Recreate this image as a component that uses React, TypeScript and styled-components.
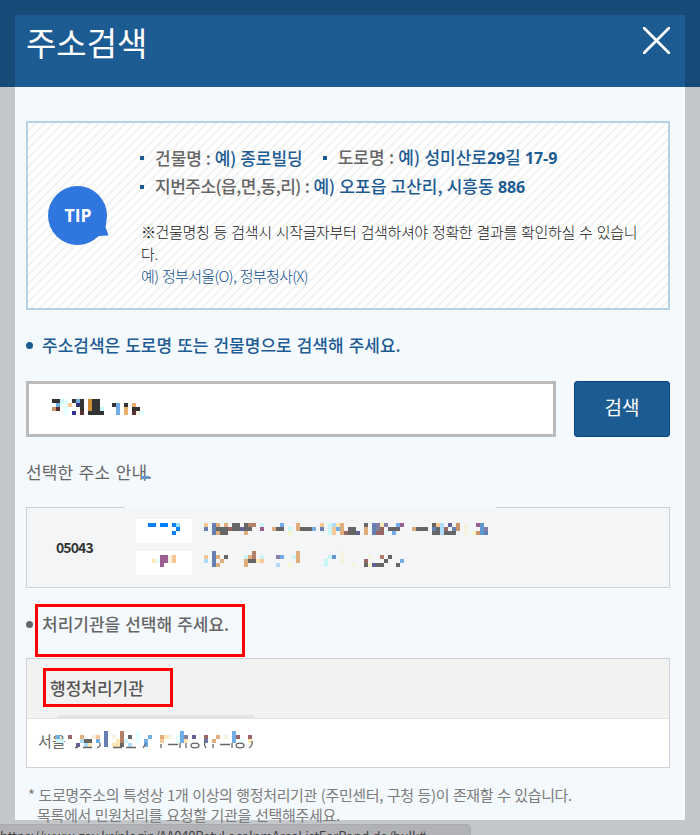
import React from "react";
import styled, { createGlobalStyle } from "styled-components";

const GlobalStyle = createGlobalStyle`
  * { box-sizing: border-box; }
  body {
    margin: 0;
    font-family: "Noto Sans CJK KR", "Noto Sans", sans-serif;
    background: #c3c7ca;
  }
  p, h1, h2, ul { margin: 0; padding: 0; font-weight: inherit; }
  ul { list-style: none; }
`;

type TextProps = {
  $size?: number;
  $line?: number;
  $weight?: number;
  $color?: string;
  $spacing?: number;
  $word?: number;
};

const Text = styled.p<TextProps>`
  font-size: ${(p) => p.$size ?? 17}px;
  line-height: ${(p) => p.$line ?? 24}px;
  font-weight: ${(p) => p.$weight ?? 500};
  color: ${(p) => p.$color ?? "#666"};
  letter-spacing: ${(p) => p.$spacing ?? 0}px;
  word-spacing: ${(p) => p.$word ?? 0}px;
  white-space: nowrap;
`;

const Blue = styled.span`
  color: #1d5b93;
`;

const Tight = styled.span`
  letter-spacing: -0.5px;
`;

const Digits = styled.span`
  font-family: "Noto Sans", sans-serif;
  font-size: 16px;
  font-weight: 700;
  letter-spacing: -0.1px;
`;

const Screen = styled.div`
  position: relative;
  width: 700px;
  height: 835px;
  padding: 15px 15px 0;
  overflow: hidden;
  background: linear-gradient(#164a77 87px, #c3c7ca 87px);
`;

const Dialog = styled.section`
  height: 805px;
  background: #f4f9fd;
`;

const Header = styled.header`
  display: flex;
  justify-content: space-between;
  height: 72px;
  padding: 5px 15px 0 11px;
  background: #1d5b93;
`;

const CloseButton = styled.button`
  width: 27px;
  height: 27px;
  margin-top: 7px;
  padding: 0;
  border: 0;
  background: none;
  svg { display: block; }
`;

const Body = styled.main`
  display: flex;
  flex-direction: column;
  padding: 34px 15px 0 11px;
`;

const TipBox = styled.div`
  display: flex;
  height: 189px;
  padding: 0 20px;
  border: 2px solid #b7d0e6;
  background: repeating-linear-gradient(135deg, #fff 0 4.9px, #f3f3f3 4.9px 6.364px);
`;

const TipBadge = styled.svg`
  flex: none;
  width: 62px;
  height: 62px;
  margin-top: 62px;
`;

const TipContent = styled.div`
  margin-left: 30px;
  padding-top: 20px;
`;

const TipItems = styled.ul`
  display: flex;
  flex-wrap: wrap;
  column-gap: 20px;
  width: 500px;
  margin-bottom: 20px;
`;

const TipNotes = styled.div`
  padding-left: 1px;
`;

const TipItem = styled.li`
  display: flex;
  align-items: center;
  gap: 11px;
  height: 29px;
  &::before {
    content: "";
    width: 4px;
    height: 4px;
    background: #1d5b93;
  }
`;

const Guide = styled.div<{ $color: string; $top: number }>`
  display: flex;
  align-items: center;
  gap: 9px;
  height: 24px;
  margin-top: ${(p) => p.$top}px;
  &::before {
    content: "";
    width: 7px;
    height: 7px;
    border-radius: 50%;
    background: ${(p) => p.$color};
  }
`;

const SearchRow = styled.div`
  display: flex;
  gap: 18px;
  height: 56px;
  margin-top: 24px;
`;

const SearchField = styled.div`
  width: 530px;
  padding: 15px 23px;
  border: 3px solid #bbb;
  background: #fff;
`;

const SearchButton = styled.button`
  width: 96px;
  padding: 0 0 5px;
  border: 1px solid #064586;
  border-radius: 3px;
  background: #1d5b93;
  color: #fff;
  font: 400 19px "Noto Sans CJK KR", sans-serif;
`;

const SelectedLabel = styled.div`
  display: flex;
  align-items: flex-end;
  height: 24px;
  margin-top: 23px;
`;

const LabelMark = styled.i`
  width: 8px;
  height: 3px;
  margin: 0 0 5px -11px;
  background: #6296cf;
`;

const AddressCard = styled.div`
  position: relative;
  display: flex;
  height: 81px;
  margin-top: 23px;
  border: 1px solid #d0d1d6;
  background: #f4f5f7;
  &::before {
    content: "";
    position: absolute;
    top: -1px;
    left: 98px;
    width: 371px;
    height: 1px;
    background: #f4f5f7;
  }
`;

const ZipCell = styled.div`
  display: flex;
  align-items: center;
  width: 109px;
  padding: 0 0 2px 29px;
`;

const AddressLines = styled.div`
  display: flex;
  flex-direction: column;
  gap: 8px;
  padding-top: 11px;
`;

const AddressLine = styled.div`
  display: flex;
  gap: 12px;
  height: 24px;
`;

const AddressKind = styled.div<{ $indent: number }>`
  width: 56px;
  padding: 4px 0 0 ${(p) => p.$indent}px;
  background: #fff;
`;

const AddressValue = styled.div<{ $top: number }>`
  padding-top: ${(p) => p.$top}px;
`;

const AgencyTable = styled.div`
  height: 110px;
  margin-top: 22px;
  border: 1px solid #cfd1d5;
  background: #fff;
`;

const AgencyHead = styled.div`
  position: relative;
  height: 60px;
  padding: 17px 0 0 23px;
  border-bottom: 1px solid #e4e4e4;
  background: #f2f2f2;
  &::after {
    content: "";
    position: absolute;
    left: 30px;
    bottom: 0;
    width: 197px;
    height: 3px;
    background: #e4e4e4;
  }
`;

const AgencyRow = styled.div`
  position: relative;
  padding: 10px 0 0 11px;
`;

const MaskLayer = styled.div`
  position: absolute;
  top: 12px;
  left: 29px;
  svg { display: block; }
`;

const Notes = styled.div`
  margin-top: 17px;
  padding-left: 2px;
`;

const Indent = styled.div`
  padding-left: 9px;
`;

const Highlight = styled.div<{ $x: number; $y: number; $w: number; $h: number }>`
  position: absolute;
  left: ${(p) => p.$x}px;
  top: ${(p) => p.$y}px;
  width: ${(p) => p.$w}px;
  height: ${(p) => p.$h}px;
  border: 3px solid #ff0000;
`;

const StatusBar = styled.div`
  position: absolute;
  left: 0;
  bottom: 0;
  width: 471px;
  height: 11px;
  padding: 4px 0 0;
  overflow: hidden;
  border-top: 1px solid #a9abae;
  border-right: 1px solid #a9abae;
  border-radius: 0 5px 0 0;
  background: #b1b2b6;
`;

const MosaicSvg = styled.svg`
  display: block;
  shape-rendering: crispEdges;
`;

const palette: Record<string, string> = {
  K: "#333333",
  G: "#666666",
  g: "#80809a",
  c: "#ccf5f8",
  v: "#e6ffff",
  B: "#72aee6",
  b: "#6296cf",
  L: "#aedcf8",
  O: "#cf9033",
  o: "#ebae6b",
  P: "#f7c896",
  T: "#dfae7c",
  t: "#c99568",
  N: "#333070",
  n: "#636095",
  M: "#9a5f90",
  R: "#996666",
  r: "#b37f66",
  W: "#5c3030",
  I: "#333390",
  S: "#667fb3",
  E: "#f5f3df",
  Y: "#f5f8c8",
  y: "#ffe6b3",
  p: "#8480aa",
  U: "#0080ff",
  u: "#99ddff",
};

/* Each row lists runs as "<column><colour key><optional length>". */
function Mosaic({ rows, cols }: { rows: string[]; cols: number }) {
  return (
    <MosaicSvg width={cols * 4} height={rows.length * 4}>
      {rows.flatMap((row, y) =>
        Array.from(row.matchAll(/(\d+)([A-Za-z])(\d*)/g)).map((m) => (
          <rect
            key={y + "-" + m[1]}
            x={Number(m[1]) * 4}
            y={y * 4}
            width={Number(m[3] || 1) * 4}
            height={4}
            fill={palette[m[2]]}
          />
        ))
      )}
    </MosaicSvg>
  );
}

const queryMask = [
  "0K2 2c 3v 5K 6B 7K 9O 10K2",
  "1B 2v2 4P 6N 7K 9O 10K2 15K 16B 18K 20o",
  "0t 1W 3v 7K 9O 10K2 12c 16B 18o 20K2",
  "3v 5I 7W 9K4 16B 18o 20W 21E 22v",
];
const roadKindMask = ["0U2 3U2 6U 7u", "7U", "6U"];
const lotKindMask = ["2M2 4E 5P", "0y 1v 2M2 4E 5P", "2M"];
const roadMask = [
  "0P 2S 3T 5T 7G2 10G 11r 12r 14c 19B 23T 29P 31c 32L 33y 34T 40G 42S 43p 44y 45p 48B 49M 57G 58P 59L 61n 63t 65E 68M 69b",
  "0S 2S 3G3 6R 7G2 9n 10G2 14M 17T 18G2 21c 23T 24G3 27B 29S 31c 32P 33B 34T 36G2 40T 42S 43g 44R 46G3 52T 53G3 57S 58G 59L 60R 62S 63t 65E 69b 70p",
  "2S 3T 4G2 10T 21Y 31c 32P 34T 35R 36G2 38n 40T 42S 43R2 45v 47B 57G2 59L 60G3 65E 67Y 68t 69b 70S",
];
const lotMask = [
  "2S 12r 23T 34E",
  "0P 2S 3T 5G 10c 11T 12r 14c 18p 19B 22c 23T 31c 32b 34E 41E 44r 46G",
  "0L 2S 4T 10T 11G2 13y 14P 23T 30c 34E 40R 45G 49B",
  "2S 3T 10T 18L 21Y 30c 37E 40G 41Y 42n 43G2 48G",
];
const agencyMask = [
  "12S 16r 20v 31B 44B",
  "0B 3R 6T 9E 10P 12S 14E 16r 18G 20v 23B 26T 27y 28E 30v 31B 32g 34n 37R 40T 42E 44B 45R 48R",
  "0c2 6L 7G2 10B 12S 15y 16r 17c 20v 22B 26P 30v 31B 32y 37S 39T 44B 46v 48y",
  "5n 7L 8y 12S 14y2 16G 18L 22B",
];

/* Lower halves of the characters that show under the mosaic. */
function MaskedStrokes() {
  return (
    <svg width="200" height="18" viewBox="0 0 200 18">
      <g fill="none" stroke="#666" strokeWidth="1.3">
        <path d="M19 16.5h3M27 16.5h9M44 12v3l-3 2M57 16.5h9M70 16.5h10M87 17l3-5" />
        <path d="M105 17v-4M112 13.5h10M124 17v-5M130 17v-5M150 9q-3 4 0 8M157 17v-4M164 13.5h10M176 17v-5M193 17q4-3 3-7" />
        <ellipse cx="139" cy="14.5" rx="4" ry="2.3" />
        <ellipse cx="184" cy="14.5" rx="4" ry="2.3" />
      </g>
    </svg>
  );
}

export default function App() {
  return (
    <>
      <GlobalStyle />
      <Screen>
        <Dialog>
          <Header>
            <Text as="h1" $size={33} $line={45} $weight={400} $color="#fff">
              주소검색
            </Text>
            <CloseButton aria-label="닫기">
              <svg width="27" height="27" viewBox="0 0 27 27">
                <path d="M0 0L27 27M27 0L0 27" stroke="#fff" strokeWidth="2.8" />
              </svg>
            </CloseButton>
          </Header>
          <Body>
            <TipBox>
              <TipBadge viewBox="0 0 62 62">
                <circle cx="29.5" cy="30.5" r="29.5" fill="#3076df" />
                <path d="M58.5 37L57.5 42L60.5 50.5L51 51L40 57Z" fill="#3076df" />
                <text
                  x="30"
                  y="37"
                  textAnchor="middle"
                  fill="#fff"
                  fontSize="18"
                  fontWeight="700"
                  fontFamily="Open Sans"
                  textLength="27"
                  lengthAdjust="spacingAndGlyphs"
                >
                  TIP
                </text>
              </TipBadge>
              <TipContent>
                <TipItems>
                  <TipItem>
                    <Text>
                      건물명 : <Blue>예) 종로빌딩</Blue>
                    </Text>
                  </TipItem>
                  <TipItem>
                    <Text $word={0.5}>
                      도로명 : <Blue>예) 성미산로<Digits>29</Digits>길 <Digits>17-9</Digits></Blue>
                    </Text>
                  </TipItem>
                  <TipItem>
                    <Text $word={0.4}>
                      <Tight>지번주소(읍,면,동,리) :</Tight>{" "}
                      <Blue>예) 오포읍 고산리, 시흥동 <Digits>886</Digits></Blue>
                    </Text>
                  </TipItem>
                </TipItems>
                <TipNotes>
                  <Text $size={15} $line={22} $weight={300} $color="#222" $spacing={-0.38} $word={1.35}>
                    ※건물명칭 등 검색시 시작글자부터 검색하셔야 정확한 결과를 확인하실 수 있습니
                  </Text>
                  <Text $size={15} $line={22} $weight={300} $color="#222" $spacing={-0.4}>
                    다.
                  </Text>
                  <Text $size={15} $line={22} $weight={300} $color="#0f4f8c" $spacing={-0.65} $word={1}>
                    예) 정부서울(O), 정부청사(X)
                  </Text>
                </TipNotes>
              </TipContent>
            </TipBox>

            <Guide $color="#1d5b93" $top={23}>
              <Text $color="#1d5b93" $word={1.2}>
                주소검색은 도로명 또는 건물명으로 검색해 주세요.
              </Text>
            </Guide>

            <SearchRow>
              <SearchField>
                <Mosaic rows={queryMask} cols={23} />
              </SearchField>
              <SearchButton>검색</SearchButton>
            </SearchRow>

            <SelectedLabel>
              <Text $weight={400} $spacing={0.1} $word={1.6}>선택한 주소 안내.</Text>
              <LabelMark />
            </SelectedLabel>

            <AddressCard>
              <ZipCell>
                <Text $size={14} $weight={700} $color="#333" $spacing={-0.9}>
                  05043
                </Text>
              </ZipCell>
              <AddressLines>
                <AddressLine>
                  <AddressKind $indent={12}>
                    <Mosaic rows={roadKindMask} cols={8} />
                  </AddressKind>
                  <AddressValue $top={4}>
                    <Mosaic rows={roadMask} cols={71} />
                  </AddressValue>
                </AddressLine>
                <AddressLine>
                  <AddressKind $indent={16}>
                    <Mosaic rows={lotKindMask} cols={6} />
                  </AddressKind>
                  <AddressValue $top={0}>
                    <Mosaic rows={lotMask} cols={50} />
                  </AddressValue>
                </AddressLine>
              </AddressLines>
            </AddressCard>

            <Guide $color="#666" $top={24}>
              <Text $word={1.2}>처리기관을 선택해 주세요.</Text>
            </Guide>

            <AgencyTable>
              <AgencyHead>
                <Text $color="#555">행정처리기관</Text>
              </AgencyHead>
              <AgencyRow>
                <Text $size={15} $line={24} $weight={400}>서울</Text>
                <MaskLayer>
                  <Mosaic rows={agencyMask} cols={49} />
                </MaskLayer>
                <MaskLayer>
                  <MaskedStrokes />
                </MaskLayer>
              </AgencyRow>
            </AgencyTable>

            <Notes>
              <Text $size={15} $line={20} $weight={400} $color="#7c7c7c" $spacing={-0.36} $word={0.8}>
                * 도로명주소의 특성상 1개 이상의 행정처리기관 (주민센터, 구청 등)이 존재할 수 있습니다.
              </Text>
              <Indent>
                <Text $size={15} $line={20} $weight={400} $color="#7c7c7c" $spacing={-0.3} $word={0.8}>
                  목록에서 민원처리를 요청할 기관을 선택해주세요.
                </Text>
              </Indent>
            </Notes>
          </Body>
        </Dialog>
        <Highlight $x={35} $y={604} $w={210} $h={53} />
        <Highlight $x={43} $y={668} $w={130} $h={39} />
        <StatusBar>
          <Text $size={13} $line={14} $weight={400} $color="#444" $spacing={-0.2}>
            https://www.gov.kr/nlogin/AA040PetyLocalnmAreaListForPopd.do/bulk#
          </Text>
        </StatusBar>
      </Screen>
    </>
  );
}
